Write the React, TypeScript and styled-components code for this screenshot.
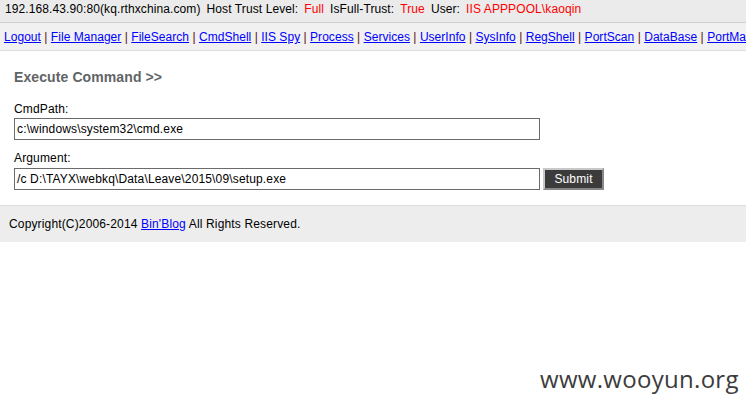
import React from "react";
import styled, { createGlobalStyle } from "styled-components";

const Global = createGlobalStyle`
  html, body { margin: 0; padding: 0; background: #fff; }
  body { font-family: "Liberation Sans", Arial, sans-serif; font-size: 12px; color: #000; letter-spacing: 0.15px; }
`;

const Page = styled.div`
  position: relative;
  width: 746px;
  height: 409px;
  overflow: hidden;
`;

const InfoBar = styled.div`
  height: 22px;
  line-height: 19px;
  padding-left: 5px;
  background: #ebebeb;
  border-bottom: 1px solid #cfcfcf;
  white-space: nowrap;
  letter-spacing: 0.1px;
`;

const Red = styled.span`
  color: #ff0000;
`;

const Gap = styled.span<{ w: number }>`
  display: inline-block;
  width: ${(p) => p.w}px;
`;

const NavBar = styled.div`
  height: 27px;
  line-height: 28px;
  padding-left: 4px;
  background: #f1f1f1;
  border-bottom: 1px solid #dedede;
  white-space: nowrap;
  overflow: hidden;
  letter-spacing: 0.04px;
`;

const NavLink = styled.a`
  color: #0000ff;
  text-decoration: underline;
`;

const Sep = styled.span`
  color: #5a1010;
`;

const Content = styled.div`
  padding: 18px 14px 15px 14px;
`;

const Title = styled.div`
  font-size: 14px;
  font-weight: bold;
  color: #5f6467;
  line-height: 16px;
  letter-spacing: 0.1px;
  margin-bottom: 17px;
`;

const Field = styled.div`
  & + & {
    margin-top: 11px;
  }
`;

const Label = styled.div`
  line-height: 15px;
  height: 15px;
  margin-bottom: 1px;
`;

const Row = styled.div`
  display: flex;
  align-items: center;
  gap: 3px;
`;

const TextInput = styled.div`
  box-sizing: border-box;
  width: 526px;
  height: 22px;
  border: 1px solid #6b6b6b;
  background: #fff;
  padding-left: 2px;
  line-height: 20px;
  font-size: 12px;
  white-space: nowrap;
`;

const Button = styled.div`
  box-sizing: border-box;
  width: 61px;
  height: 22px;
  margin-top: 1px;
  background: #3b3b3b;
  color: #fff;
  border: 2px solid;
  border-color: #c8c8c8 #888 #888 #c8c8c8;
  text-align: center;
  line-height: 18px;
  font-size: 12px;
`;

const Footer = styled.div`
  height: 36px;
  line-height: 36px;
  padding-left: 9px;
  background: #ededed;
  border-top: 1px solid #dcdcdc;
`;

const Watermark = styled.div`
  position: absolute;
  left: 540px;
  top: 362px;
  font-family: "Open Sans", "DejaVu Sans", sans-serif;
  font-size: 24px;
  color: #3c3c3c;
  letter-spacing: 0.3px;
`;

const links = [
  "Logout",
  "File Manager",
  "FileSearch",
  "CmdShell",
  "IIS Spy",
  "Process",
  "Services",
  "UserInfo",
  "SysInfo",
  "RegShell",
  "PortScan",
  "DataBase",
  "PortMap",
];

export default function App() {
  return (
    <Page>
      <Global />
      <InfoBar>
        192.168.43.90:80(kq.rthxchina.com)<Gap w={6} />Host Trust Level:<Gap w={6} />
        <Red>Full</Red>
        <Gap w={6} />IsFull-Trust:<Gap w={6} />
        <Red>True</Red>
        <Gap w={6} />User:<Gap w={6} />
        <Red>IIS APPPOOL\kaoqin</Red>
      </InfoBar>
      <NavBar>
        {links.map((l, i) => (
          <React.Fragment key={l}>
            {i > 0 && <Sep> | </Sep>}
            <NavLink href="#">{l}</NavLink>
          </React.Fragment>
        ))}
      </NavBar>
      <Content>
        <Title>Execute Command &gt;&gt;</Title>
        <Field>
          <Label>CmdPath:</Label>
          <TextInput>c:\windows\system32\cmd.exe</TextInput>
        </Field>
        <Field>
          <Label>Argument:</Label>
          <Row>
            <TextInput>/c D:\TAYX\webkq\Data\Leave\2015\09\setup.exe</TextInput>
            <Button>Submit</Button>
          </Row>
        </Field>
      </Content>
      <Footer>
        Copyright(C)2006-2014 <NavLink href="#">Bin'Blog</NavLink> All Rights Reserved.
      </Footer>
      <Watermark>www.wooyun.org</Watermark>
    </Page>
  );
}
